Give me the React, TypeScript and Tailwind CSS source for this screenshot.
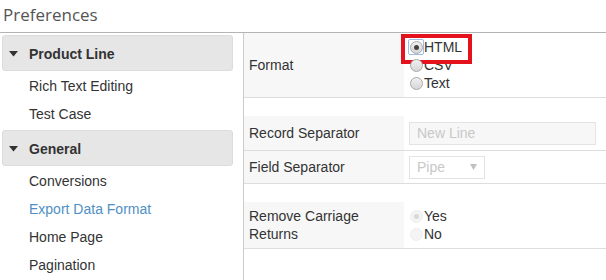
import React from "react";

function Radio({ checked, disabled, focus }: { checked?: boolean; disabled?: boolean; focus?: boolean }) {
  return (
    <span className="relative inline-flex w-[15px] h-[18px] items-center justify-center">
      {focus && <span className="absolute left-[-1px] top-[1px] w-[16px] h-[16px] border border-[#9cbcea] rounded-[2px]" />}
      <span
        className={
          disabled
            ? "w-[13px] h-[13px] rounded-full border border-[#eeeeee] bg-[#f4f4f4] flex items-center justify-center"
            : "w-[13px] h-[13px] rounded-full border border-[#a9a9a9] bg-gradient-to-b from-[#f0f0f0] to-[#d6d6d6] flex items-center justify-center"
        }
      >
        {checked && (
          <span className={disabled ? "w-[5px] h-[5px] rounded-full bg-[#d8d8d8]" : "w-[5px] h-[5px] rounded-full bg-[#444]"} />
        )}
      </span>
    </span>
  );
}

function NavHeader({ label }: { label: string }) {
  return (
    <div className="h-[36px] w-[231px] rounded-[3px] border border-[#dcdcdc] bg-[#e6e6e6] flex items-center pt-[2px]">
      <svg width="9" height="6" viewBox="0 0 9 6" className="ml-[6px] mr-[11px]">
        <polygon points="0,0 9,0 4.5,5.5" fill="#333" />
      </svg>
      <span className="font-bold text-[14px] text-[#333]">{label}</span>
    </div>
  );
}

function NavItem({ label, active }: { label: string; active?: boolean }) {
  return (
    <div className={"h-[28px] flex items-center pl-[27px] pt-[3px] text-[14px] " + (active ? "text-[#4f8fc4]" : "text-[#333]")}>
      {label}
    </div>
  );
}

export default function App() {
  return (
    <div className="w-[606px] h-[280px] bg-white overflow-hidden font-['Liberation_Sans',Arial,sans-serif]">
      <div className="h-[32px] pl-[3px] flex items-center text-[17px] text-[#555] font-['Open_Sans',sans-serif] leading-none pb-[3px]">
        Preferences
      </div>
      <div className="border-t border-[#b4b4b4] flex h-[248px]">
        <div className="w-[244px] border-r border-[#cccccc] pl-[2px] pt-[2px]">
          <NavHeader label="Product Line" />
          <NavItem label="Rich Text Editing" />
          <NavItem label="Test Case" />
          <div className="h-[3px]" />
          <NavHeader label="General" />
          <NavItem label="Conversions" />
          <NavItem label="Export Data Format" active />
          <NavItem label="Home Page" />
          <NavItem label="Pagination" />
        </div>
        <div className="flex-1 flex flex-col text-[14px] text-[#333]">
          <div className="h-[65px] border-b border-[#dddddd] flex">
            <div className="w-[160px] bg-[#f7f7f7] pl-[5px] flex items-center">Format</div>
            <div className="flex-1 pl-[5px] flex flex-col justify-center">
              <div className="relative h-[18px] flex items-center">
                <Radio checked focus />
                <span>HTML</span>
                <div className="absolute left-[-8px] top-[-4px] w-[71px] h-[30px] border-[4px] border-[#e3121c]" />
              </div>
              <div className="h-[18px] flex items-center">
                <Radio />
                <span>CSV</span>
              </div>
              <div className="h-[18px] flex items-center">
                <Radio />
                <span>Text</span>
              </div>
            </div>
          </div>
          <div className="h-[18px]" />
          <div className="h-[35px] border-b border-[#dddddd] flex">
            <div className="w-[160px] bg-[#f7f7f7] pl-[5px] flex items-center">Record Separator</div>
            <div className="flex-1 pl-[5px] flex items-center">
              <div className="w-[187px] h-[23px] border border-[#e3e3e3] bg-[#f7f7f7] pl-[7px] flex items-center text-[#c8c8c8]">
                New Line
              </div>
            </div>
          </div>
          <div className="h-[33px] border-b border-[#dddddd] flex">
            <div className="w-[160px] bg-[#f7f7f7] pl-[5px] flex items-center">Field Separator</div>
            <div className="flex-1 pl-[5px] flex items-center">
              <div className="w-[76px] h-[23px] border border-[#e3e3e3] bg-white pl-[7px] pr-[7px] flex items-center justify-between text-[#c8c8c8]">
                <span>Pipe</span>
                <svg width="7" height="6" viewBox="0 0 7 6">
                  <polygon points="0,0 7,0 3.5,6" fill="#c0c0c0" />
                </svg>
              </div>
            </div>
          </div>
          <div className="h-[18px]" />
          <div className="h-[47px] border-b border-[#dddddd] flex">
            <div className="w-[160px] bg-[#f7f7f7] pl-[5px] flex flex-col justify-center leading-[18px]">
              <span>Remove Carriage</span>
              <span>Returns</span>
            </div>
            <div className="flex-1 pl-[5px] flex flex-col justify-center">
              <div className="h-[18px] flex items-center">
                <Radio checked disabled />
                <span>Yes</span>
              </div>
              <div className="h-[18px] flex items-center">
                <Radio disabled />
                <span>No</span>
              </div>
            </div>
          </div>
        </div>
      </div>
    </div>
  );
}
